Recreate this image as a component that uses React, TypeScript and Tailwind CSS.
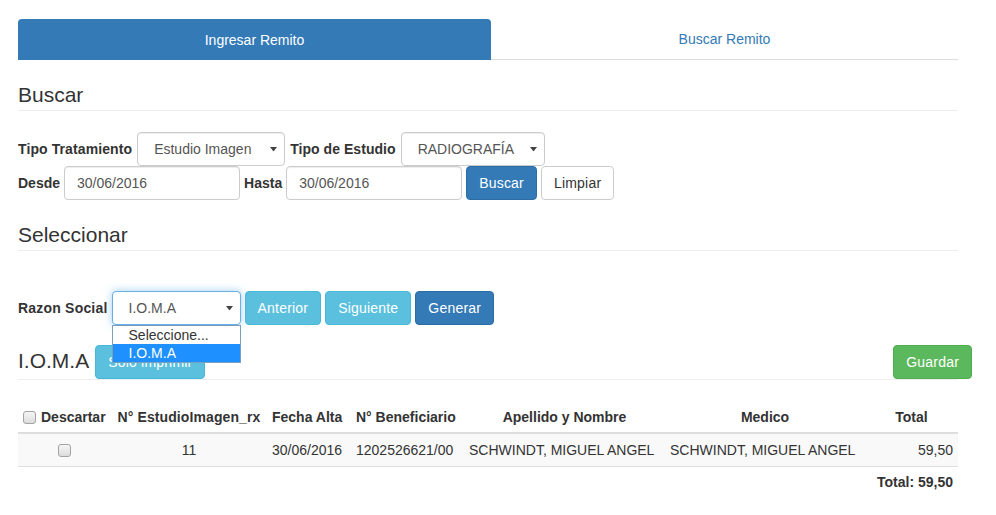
import React from "react";

function Caret() {
  return (
    <svg
      className="absolute right-[7px] top-1/2 -translate-y-1/2"
      width="7"
      height="5"
      viewBox="0 0 7 5"
    >
      <path d="M0 0.5h7L3.5 5z" fill="#444" />
    </svg>
  );
}

function Select({ value, width, focused }: { value: string; width: string; focused?: boolean }) {
  return (
    <div
      className={
        "relative flex h-[34px] items-center rounded-[4px] border bg-white pl-[16px] text-[#555] " +
        width +
        (focused
          ? " border-[#66afe9] shadow-[0_0_8px_rgba(102,175,233,0.6)]"
          : " border-[#ccc] shadow-[inset_0_1px_1px_rgba(0,0,0,0.075)]")
      }
    >
      {value}
      <Caret />
    </div>
  );
}

function Input({ value }: { value: string }) {
  return (
    <div className="flex h-[34px] w-[176px] items-center rounded-[4px] border border-[#ccc] bg-white px-3 text-[#555] shadow-[inset_0_1px_1px_rgba(0,0,0,0.075)]">
      {value}
    </div>
  );
}

function Btn({ children, kind }: { children: React.ReactNode; kind: "primary" | "info" | "success" | "default" }) {
  const styles = {
    primary: "bg-[#337ab7] border-[#2e6da4] text-white",
    info: "bg-[#5bc0de] border-[#46b8da] text-white",
    success: "bg-[#5cb85c] border-[#4cae4c] text-white",
    default: "bg-white border-[#ccc] text-[#333]",
  };
  return (
    <button className={"h-[34px] whitespace-nowrap rounded-[4px] border px-3 text-sm tracking-[0.2px] " + styles[kind]}>
      {children}
    </button>
  );
}

function Check() {
  return (
    <span className="inline-block h-[13px] w-[13px] shrink-0 rounded-[3px] border border-[#a3a3a3] bg-linear-to-b from-[#f6f6f6] to-[#dcdcdc]" />
  );
}

function PageHeader({ title, className }: { title: string; className: string }) {
  return (
    <h3 className={"border-b border-[#eee] pb-[4px] text-[21px] leading-[23px] font-normal text-[#333] " + className}>
      {title}
    </h3>
  );
}

export default function App() {
  return (
    <div className="min-h-screen bg-white font-['Liberation_Sans',Arial,sans-serif] text-sm text-[#333]">
      <div className="ml-[18px] w-[940px] pt-[19px]">
        {/* tabs */}
        <div className="flex h-[41px]">
          <div className="flex w-[473px] items-center justify-center rounded-t-[4px] bg-[#337ab7] text-white">
            Ingresar Remito
          </div>
          <div className="flex flex-1 items-center justify-center border-b border-[#ddd] text-[#337ab7]">
            Buscar Remito
          </div>
        </div>

        <PageHeader title="Buscar" className="mt-[23px]" />

        <div className="mt-[21px] flex h-[34px] items-center gap-[5px]">
          <label className="font-bold tracking-[0.1px]">Tipo Tratamiento</label>
          <Select value="Estudio Imagen" width="w-[148px]" />
          <label className="font-bold tracking-[0.05px]">Tipo de Estudio</label>
          <Select value="RADIOGRAFÍA" width="w-[144px]" />
        </div>
        <div className="flex h-[34px] items-center gap-[4px]">
          <label className="font-bold">Desde</label>
          <Input value="30/06/2016" />
          <label className="font-bold">Hasta</label>
          <Input value="30/06/2016" />
          <Btn kind="primary">Buscar</Btn>
          <Btn kind="default">Limpiar</Btn>
        </div>

        <PageHeader title="Seleccionar" className="mt-[23px]" />

        <div className="mt-[40px] flex h-[34px] items-center gap-[4px]">
          <label className="font-bold tracking-[0.2px]">Razon Social</label>
          <div className="relative">
            <Select value="I.O.M.A" width="w-[129px]" focused />
            <div className="absolute left-0 top-full z-10 w-full border border-[#7b9ebd] bg-white">
              <div className="h-[18px] pl-[16px] leading-[18px] text-[#333]">Seleccione...</div>
              <div className="h-[18px] bg-[#1e90ff] pl-[16px] leading-[18px] text-white">I.O.M.A</div>
            </div>
          </div>
          <Btn kind="info">Anterior</Btn>
          <Btn kind="info">Siguiente</Btn>
          <Btn kind="primary">Generar</Btn>
        </div>

        <div className="mt-[20px] flex h-[35px] items-start justify-between border-b border-[#eee]">
          <div className="flex items-start gap-[6px]">
            <h3 className="mt-[4px] text-[21px] leading-[23px] font-normal">I.O.M.A</h3>
            <Btn kind="info">Solo imprimir</Btn>
          </div>
          <div className="-mr-[14px]">
            <Btn kind="success">Guardar</Btn>
          </div>
        </div>

        <table className="mt-[16px] w-[940px] table-fixed border-collapse">
          <colgroup>
            <col className="w-[93px]" />
            <col className="w-[156px]" />
            <col className="w-[84px]" />
            <col className="w-[113px]" />
            <col className="w-[201px]" />
            <col className="w-[200px]" />
            <col className="w-[93px]" />
          </colgroup>
          <thead>
            <tr className="border-b-2 border-[#ddd] font-bold">
              <th className="px-[5px] pt-[11px] pb-[5px] text-left leading-5 whitespace-nowrap">
                <span className="flex items-center gap-[5px]">
                  <Check />
                  Descartar
                </span>
              </th>
              <th className="px-[5px] pt-[11px] pb-[5px] text-center leading-5 whitespace-nowrap tracking-[0.1px]">N° EstudioImagen_rx</th>
              <th className="px-[5px] pt-[11px] pb-[5px] text-left leading-5 whitespace-nowrap">Fecha Alta</th>
              <th className="px-[5px] pt-[11px] pb-[5px] text-left leading-5 whitespace-nowrap">N° Beneficiario</th>
              <th className="px-[5px] pt-[11px] pb-[5px] text-center leading-5 whitespace-nowrap">Apellido y Nombre</th>
              <th className="px-[5px] pt-[11px] pb-[5px] text-center leading-5 whitespace-nowrap">Medico</th>
              <th className="px-[5px] pt-[11px] pb-[5px] text-center leading-5 whitespace-nowrap">Total</th>
            </tr>
          </thead>
          <tbody>
            <tr className="border-b border-[#ddd] bg-[#f9f9f9]">
              <td className="px-[5px] py-[6px] leading-5">
                <span className="flex justify-center">
                  <Check />
                </span>
              </td>
              <td className="px-[5px] py-[6px] text-center leading-5">11</td>
              <td className="px-[5px] py-[6px] leading-5 whitespace-nowrap">30/06/2016</td>
              <td className="px-[5px] py-[6px] leading-5 whitespace-nowrap">1202526621/00</td>
              <td className="px-[5px] py-[6px] leading-5 whitespace-nowrap">SCHWINDT, MIGUEL ANGEL</td>
              <td className="px-[5px] py-[6px] leading-5 whitespace-nowrap">SCHWINDT, MIGUEL ANGEL</td>
              <td className="px-[5px] py-[6px] text-right leading-5">59,50</td>
            </tr>
          </tbody>
        </table>
        <div className="pt-[5px] pr-[5px] text-right leading-5 font-bold">Total: 59,50</div>
      </div>
    </div>
  );
}
